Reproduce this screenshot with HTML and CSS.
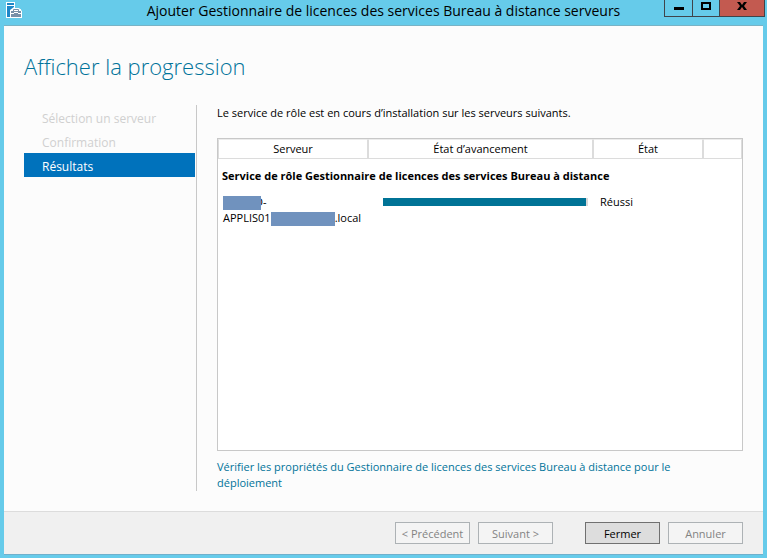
FILE: index.html
```html
<!DOCTYPE html>
<html lang="fr">
<head>
    <meta charset="UTF-8">
    <title>Ajouter Gestionnaire de licences des services Bureau à distance serveurs</title>
    <link rel="stylesheet" href="styles.css">
</head>
<body>
<div class="window">
    <div class="titlebar">
        <svg class="app-icon" width="18" height="18" viewBox="0 0 18 18">
            <path d="M1 1h9v6h4l3 3v7H1z" fill="#fff"/>
            <path d="M2 2h7v2H2zM2 5h7v1L5 9v7H2z" fill="#1e87c8"/>
            <path d="M10 7h4v1h2v2h1v7H5V9h2V8h3z" fill="#fff"/>
            <path d="M6 10h10v6H6z" fill="#7790a8"/>
            <path d="M8.500 10V8.500h5V10" fill="none" stroke="#7790a8"/>
            <path d="M6 12.500h3M13 12.500h3M9 11.500h4" stroke="#fff"/>
        </svg>
        <h1 class="caption">Ajouter Gestionnaire de licences des services Bureau à distance serveurs</h1>
        <div class="controls">
            <button class="ctl ctl-min" aria-label="Réduire"><svg width="12" height="12"><path d="M1 7h10v3H1z"/></svg></button>
            <button class="ctl ctl-max" aria-label="Agrandir"><svg width="12" height="12"><path d="M2 3h8v6H2z" fill="none" stroke="#000" stroke-width="2"/></svg></button>
            <button class="ctl ctl-close" aria-label="Fermer la fenêtre"><svg width="12" height="12"><path d="M1 2h3l2 3 2-3h3L8 6l3 4H8L6 7l-2 3H1l3-4z"/></svg></button>
        </div>
    </div>
    <div class="client">
        <h2 class="heading">Afficher la progression</h2>
        <div class="content">
            <ul class="steps">
                <li>Sélection un serveur</li>
                <li>Confirmation</li>
                <li class="current">Résultats</li>
            </ul>
            <div class="main">
                <p class="intro">Le service de rôle est en cours d’installation sur les serveurs suivants.</p>
                <div class="list">
                    <table>
                        <colgroup>
                            <col class="c-server"><col class="c-progress"><col class="c-state"><col>
                        </colgroup>
                        <thead>
                            <tr><th>Serveur</th><th>État d’avancement</th><th>État</th><th></th></tr>
                        </thead>
                        <tbody>
                            <tr class="group"><td colspan="4">Service de rôle Gestionnaire de licences des services Bureau à distance</td></tr>
                            <tr class="row">
                                <td><span class="mask mask-short"></span>D-<br>APPLIS01<span class="mask"></span>.local</td>
                                <td><progress value="99" max="100" aria-label="État d’avancement"></progress></td>
                                <td>Réussi</td>
                                <td></td>
                            </tr>
                        </tbody>
                    </table>
                </div>
                <p class="more"><a href="#">Vérifier les propriétés du Gestionnaire de licences des services Bureau à distance pour le déploiement</a></p>
            </div>
        </div>
        <div class="footer">
            <button class="btn" disabled>&lt; Précédent</button>
            <button class="btn" disabled>Suivant &gt;</button>
            <button class="btn btn-default">Fermer</button>
            <button class="btn" disabled>Annuler</button>
        </div>
    </div>
</div>
</body>
</html>
```
FILE: styles.css
```css
* {box-sizing: border-box;}
body {margin: 0; font: 11px/16px "Open Sans", "Noto Sans", sans-serif; color: #000;}
h1, h2, p, ul {margin: 0; padding: 0; font-weight: normal;}
button {font: inherit; padding: 0; margin: 0;}

.window {display: flex; flex-direction: column; min-height: 100vh; padding: 0 4px 3px; background: #66cbea;}

/* title bar */
.titlebar {display: flex; align-items: flex-start; height: 25px;}
.app-icon {flex: none; margin: 1px 0 0 1px;}
.caption {flex: 1; padding-left: 80px; text-align: center; font-size: 14px; line-height: 22px; white-space: nowrap;}
.controls {display: flex; height: 17px; border: 1px solid #40444a; border-top: 0; margin-right: -2px;}
.ctl {display: flex; justify-content: center; border: 0; background: none;}
.ctl-min {width: 27px;}
.ctl-max {width: 27px; border-left: 1px solid #40444a;}
.ctl-close {width: 45px; border-left: 1px solid #40444a; background: #c35a50;}

.client {flex: 1; display: flex; flex-direction: column; background: #fcfcfc; border-top: 1px solid #79b3c5; border-bottom: 1px solid #6fb0cc;}
.heading {padding: 20px 20px 0; font-size: 22px; font-weight: 300; line-height: 40px; color: #00739a;}
.content {flex: 1; display: flex; padding: 19px 20px 20px;}

/* steps on the left */
.steps {flex: none; width: 173px; padding: 0 1px 0 0; border-right: 1px solid #c8c8c8; list-style: none;}
.steps li {padding: 4px 0 0 18px; font-size: 12px; line-height: 20px; color: #d0d0d0;}
.steps .current {background: #0072bc; color: #fff;}

.main {flex: 1; display: flex; flex-direction: column; padding-left: 20px;}
.intro {padding-bottom: 17px;}
.list {flex: 1; border: 1px solid #c8c8c8; background: #fff;}
table {width: 100%; table-layout: fixed; border-collapse: separate; border-spacing: 0;}
.c-server {width: 150px;}
.c-progress {width: 225px;}
.c-state {width: 110px;}
th {height: 20px; padding: 0; font-weight: normal; border: 1px solid #dcdcdc; border-top-color: #ececec;}
td {padding: 0 5px; vertical-align: top;}
.group td {padding: 9px 4px 10px; font-weight: bold;}
.row td + td {padding-left: 7px;}
.mask {display: inline-block; position: relative; width: 64px; height: 14px; vertical-align: middle; background: #7092be;}
.mask-short {width: 38px; margin-right: -6px;}
progress {display: block; width: 205px; height: 8px; margin: 4px 0 0 8px; border: 0; background: #d8d8d8; -webkit-appearance: none; appearance: none;}
progress::-webkit-progress-bar {background: #d8d8d8;}
progress::-webkit-progress-value {background: #007396;}
.more {padding: 8px 40px 0 0;}
.more a {color: #00739a; text-decoration: none;}

/* buttons */
.footer {display: flex; justify-content: flex-end; gap: 8px; padding: 10px 20px; border-top: 1px solid #dcdcdc; background: #f0f0f0;}
.btn {width: 75px; height: 22px; padding-top: 1px; border: 1px solid #adb2b5; background: #f4f4f4; color: #838383;}
.btn-default {margin-left: 24px; border-color: #707070; background: #ddd; color: #000;}
```
